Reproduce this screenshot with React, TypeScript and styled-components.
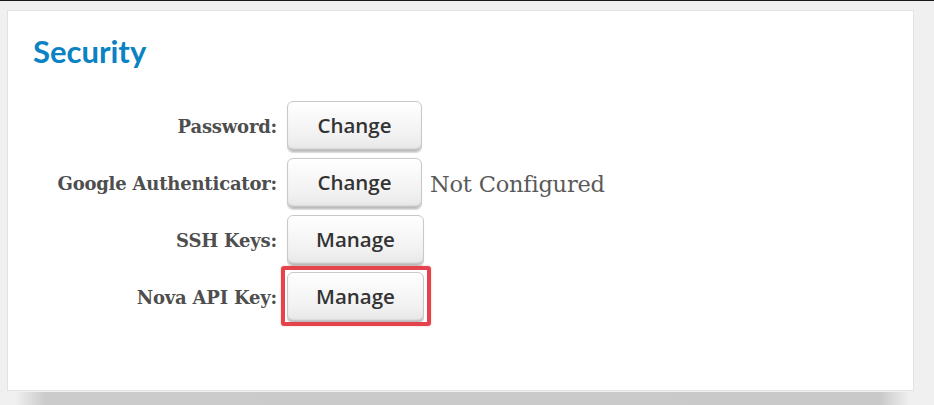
import styled, { createGlobalStyle } from "styled-components";

const GlobalStyle = createGlobalStyle`
  html, body {
    margin: 0;
    padding: 0;
    background: #f0f0f0;
  }
  body {
    border-top: 1px solid #1a1a1a;
    font-family: "Open Sans", "Lato", sans-serif;
  }
`;

const Page = styled.div`
  padding: 9px 20px 0 7px;
  height: 404px;
  box-sizing: border-box;
  overflow: hidden;
`;

const Card = styled.section`
  background: #fff;
  border: 1px solid #e2e2e2;
  height: 381px;
  box-sizing: border-box;
  padding: 22px 25px 0;
`;

const Title = styled.h2`
  margin: 0 0 32px;
  font-family: "Lato", sans-serif;
  font-weight: 700;
  font-size: 31px;
  line-height: 36px;
  color: #0a82c4;
`;

const Rows = styled.div`
  display: grid;
  grid-template-columns: 244px auto 1fr;
  column-gap: 10px;
  row-gap: 6px;
  align-items: center;
`;

const Label = styled.span`
  justify-self: end;
  font-family: "DejaVu Serif", serif;
  font-weight: 700;
  font-size: 18px;
  letter-spacing: -0.2px;
  color: #4e4e4e;
`;

const Button = styled.button<{ $wide?: boolean; $highlight?: boolean }>`
  position: relative;
  width: ${(p) => (p.$wide ? 137 : 135)}px;
  height: 51px;
  box-sizing: border-box;
  border: 1px solid #c9c9c9;
  border-radius: 6px;
  background: linear-gradient(#ffffff, #f1f1f1 70%, #e6e6e6);
  box-shadow: inset 0 -3px 2px -1px #b9b9b9, 0 1px 1px rgba(0, 0, 0, 0.15);
  font-family: "Open Sans", sans-serif;
  font-size: 20.5px;
  font-weight: 600;
  color: #333;
  padding: 0 0 3px;
  cursor: pointer;

  &::after {
    content: "";
    display: ${(p) => (p.$highlight ? "block" : "none")};
    position: absolute;
    inset: -7px -8px -4px -7px;
    border: 4px solid #e4434b;
    border-radius: 3px;
    box-shadow: 0 0 2px rgba(228, 67, 75, 0.4);
    pointer-events: none;
  }
`;

const Note = styled.span`
  font-family: "DejaVu Serif", serif;
  font-size: 22.5px;
  letter-spacing: -0.2px;
  color: #5a5a5a;
  margin-left: -4px;
`;

const NextShadow = styled.div`
  height: 14px;
  margin: 1px 4px 0 8px;
  background: linear-gradient(
    to right,
    #f0f0f0 0,
    #cbcbcb 30px,
    #c9c9c9 calc(100% - 30px),
    #f0f0f0 100%
  );
`;

type Row = { label: string; action: string; note?: string; highlight?: boolean };

const rows: Row[] = [
  { label: "Password:", action: "Change" },
  { label: "Google Authenticator:", action: "Change", note: "Not Configured" },
  { label: "SSH Keys:", action: "Manage" },
  { label: "Nova API Key:", action: "Manage", highlight: true },
];

export default function App() {
  return (
    <>
      <GlobalStyle />
      <Page>
        <Card>
          <Title>Security</Title>
          <Rows>
            {rows.map((r) => (
              <>
                <Label key={r.label}>{r.label}</Label>
                <Button $wide={r.action === "Manage"} $highlight={r.highlight}>
                  {r.action}
                </Button>
                {r.note ? <Note>{r.note}</Note> : <span />}
              </>
            ))}
          </Rows>
        </Card>
        <NextShadow />
      </Page>
    </>
  );
}
